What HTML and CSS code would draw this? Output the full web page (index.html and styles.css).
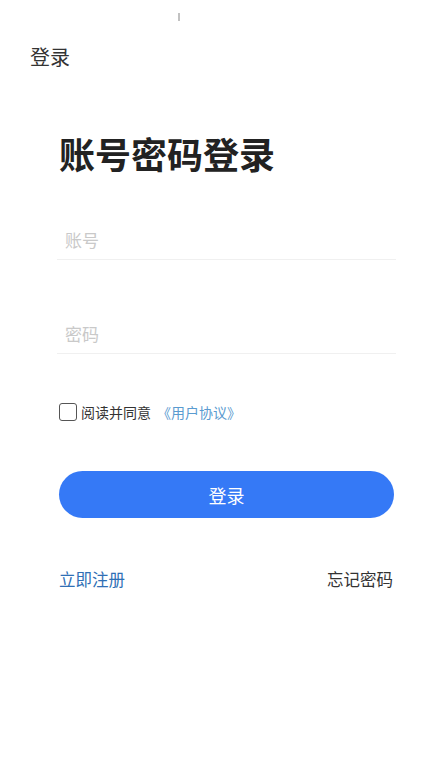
FILE: index.html
```html
<!DOCTYPE html>
<html lang="zh-CN">
<head>
<meta charset="UTF-8">
<meta name="viewport" content="width=device-width, initial-scale=1.0">
<title>登录</title>
<link rel="stylesheet" href="styles.css">
</head>
<body>

<div class="status-bar"><span class="status-mark"></span></div>

<header class="top-bar">登录</header>

<main class="login">
  <h1 class="login-title">账号密码登录</h1>

  <div class="field">
    <input type="text" class="field-input" placeholder="账号">
  </div>

  <div class="field field-password">
    <input type="password" class="field-input" placeholder="密码">
  </div>

  <label class="agree-row">
    <span class="check-box"></span>
    <span class="agree-text">阅读并同意</span>
    <a href="#" class="agree-link">《用户协议》</a>
  </label>

  <button class="login-button">登录</button>

  <div class="link-row">
    <a href="#" class="register-link">立即注册</a>
    <a href="#" class="forgot-link">忘记密码</a>
  </div>
</main>

</body>
</html>
```

FILE: styles.css
```css
/* Login page */
body {
  margin: 0;
  background: #fff;
  font-family: "Noto Sans CJK SC", "Noto Sans", sans-serif;
  color: #333;
}

.status-bar {
  height: 34px;
  padding-left: 178px;
  box-sizing: border-box;
  padding-top: 13px;
}

.status-mark {
  display: block;
  width: 2px;
  height: 8px;
  background: #999;
  opacity: 0.6;
}

.top-bar {
  height: 46px;
  line-height: 46px;
  padding-left: 30px;
  font-size: 20px;
  color: #333;
}

.login {
  padding: 0 39px 0 57px;
}

.login-title {
  margin: 51px 0 0 2px;
  font-size: 36px;
  line-height: 44px;
  font-weight: 700;
  color: #222;
}

.field {
  margin-top: 45px;
  border-bottom: 1px solid #f0f0f0;
}

.field-password {
  margin-top: 54px;
}

.field-input {
  display: block;
  width: 100%;
  box-sizing: border-box;
  height: 39px;
  padding: 0 0 0 8px;
  border: none;
  outline: none;
  background: transparent;
  font-family: inherit;
  font-size: 17px;
  color: #333;
  caret-color: transparent;
}

.field-input::placeholder {
  color: #c9c9c9;
}

.agree-row {
  display: flex;
  align-items: center;
  height: 24px;
  margin: 46px 0 0 2px;
  font-size: 14px;
}

.check-box {
  width: 16px;
  height: 16px;
  border: 1.5px solid #555;
  border-radius: 3px;
  margin-right: 4px;
}

.agree-text {
  color: #333;
}

.agree-link {
  margin-left: 6px;
  color: #5a9bd0;
  text-decoration: none;
}

.login-button {
  display: block;
  width: calc(100% - 4px);
  height: 47px;
  margin: 47px 2px 0;
  border: none;
  border-radius: 24px;
  background: #3579f6;
  color: #fff;
  font-family: inherit;
  font-size: 18px;
}

.link-row {
  display: flex;
  justify-content: space-between;
  margin: 49px 3px 0 2px;
  line-height: 24px;
  font-size: 16.5px;
}

.register-link {
  color: #2f6fb5;
  text-decoration: none;
}

.forgot-link {
  color: #333;
  text-decoration: none;
}
```
